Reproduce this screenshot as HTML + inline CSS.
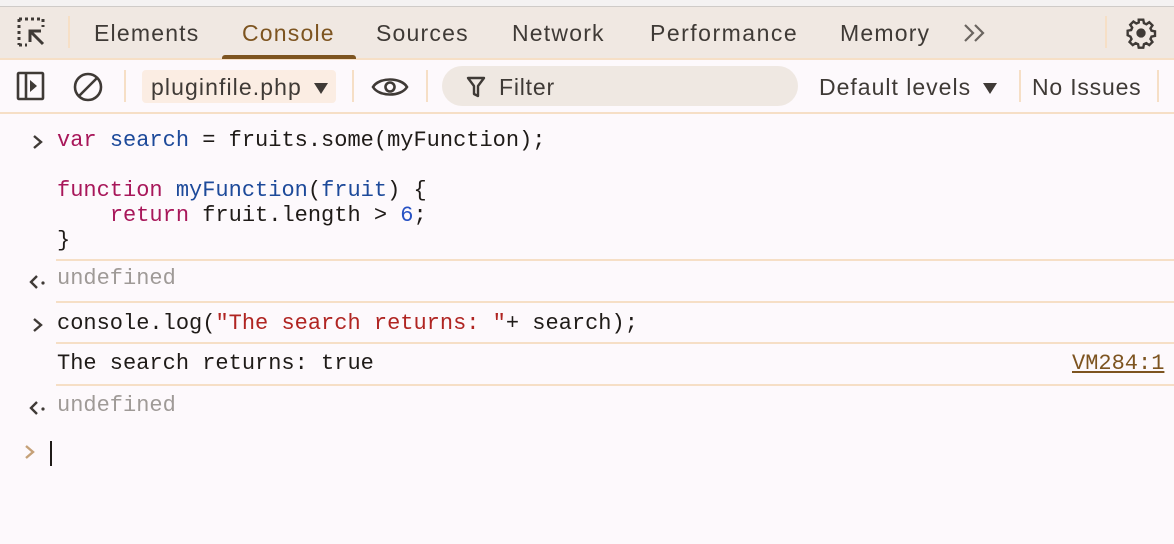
<!DOCTYPE html>
<html><head><meta charset="utf-8"><style>
*{margin:0;padding:0;box-sizing:border-box}
body{width:1174px;height:544px;overflow:hidden;background:#fdf9fc;font-family:"Liberation Sans",sans-serif;color:#3f3a36;position:relative}
.a{position:absolute}
.mono{font-family:"Liberation Mono",monospace;font-size:22px;white-space:pre;line-height:25px}
.tab{position:absolute;top:20px;font-size:23px;color:#3f3a36;letter-spacing:1.2px}
.sep{position:absolute;left:56px;right:0;height:2px;background:#f6dfc6}
</style></head><body>
<div class="a" style="left:0;top:0;width:1174px;height:6px;background:#f4f2f2"></div>
<div class="a" style="left:0;top:6px;width:1174px;height:1px;background:#cfcbc8"></div>
<div class="a" style="left:0;top:7px;width:1174px;height:51px;background:#f0e8e2"></div>
<div class="a" style="left:0;top:58px;width:1174px;height:2px;background:#f6dfc6"></div>
<svg class="a" style="left:16px;top:17px" width="32" height="32" viewBox="0 0 32 32" fill="none" stroke="#3f3a36" stroke-width="3">
<path d="M3 2h24" stroke-dasharray="3 3"/><path d="M3 2v26" stroke-dasharray="3 3"/><path d="M3 28h8" stroke-dasharray="3 3"/><path d="M27 2v8" stroke-dasharray="3 3"/>
<path d="M27 27L15 15M14 25V14h11"/></svg>
<div class="a" style="left:68px;top:16px;width:2px;height:32px;background:#f6dfc6"></div>
<div class="tab" style="left:94px">Elements</div>
<div class="tab" style="left:242px;color:#7d5420">Console</div>
<div class="a" style="left:222px;top:55px;width:134px;height:4px;background:#7d5420;border-radius:3px 3px 0 0"></div>
<div class="tab" style="left:376px">Sources</div>
<div class="tab" style="left:512px">Network</div>
<div class="tab" style="left:650px;letter-spacing:1.5px">Performance</div>
<div class="tab" style="left:840px">Memory</div>
<svg class="a" style="left:962px;top:22px" width="28" height="22" viewBox="0 0 28 22" fill="none" stroke="#6b6560" stroke-width="2.2"><path d="M3 3l8 8-8 8M13 3l8 8-8 8"/></svg>
<div class="a" style="left:1105px;top:16px;width:2px;height:32px;background:#f6dfc6"></div>
<svg class="a" style="left:1125px;top:17px" width="32" height="32" viewBox="0 0 24 24" fill="none" stroke="#3f3a36" stroke-width="1.8"><path d="M10.3 2h3.4l.5 2.6 1.8.8 2.2-1.5 2.4 2.4-1.5 2.2.8 1.8 2.6.5v3.4l-2.6.5-.8 1.8 1.5 2.2-2.4 2.4-2.2-1.5-1.8.8-.5 2.6h-3.4l-.5-2.6-1.8-.8-2.2 1.5-2.4-2.4 1.5-2.2-.8-1.8L2 13.7v-3.4l2.6-.5.8-1.8-1.5-2.2 2.4-2.4 2.2 1.5 1.8-.8z"/><circle cx="12" cy="12" r="2.6" fill="#3f3a36"/></svg>
<!-- toolbar -->
<svg class="a" style="left:16px;top:71px" width="30" height="30" viewBox="0 0 30 30" fill="none" stroke="#3f3a36" stroke-width="2.6"><rect x="2" y="2" width="25" height="26" rx="1"/><path d="M10 2v26"/><path d="M14 9l7 6-7 6z" fill="#3f3a36" stroke="none"/></svg>
<svg class="a" style="left:72px;top:71px" width="32" height="32" viewBox="0 0 32 32" fill="none" stroke="#3f3a36" stroke-width="2.6"><circle cx="16" cy="16" r="13"/><path d="M7 25L25 7"/></svg>
<div class="a" style="left:124px;top:70px;width:2px;height:32px;background:#f6dfc6"></div>
<div class="a" style="left:142px;top:70px;width:194px;height:33px;background:#fbede3;border-radius:4px"></div>
<div class="a" style="left:151px;top:74px;font-size:23px;letter-spacing:1.1px">pluginfile.php</div>
<svg class="a" style="left:314px;top:83px" width="14" height="12"><path d="M0 0h14L7 11z" fill="#3f3a36"/></svg>
<div class="a" style="left:352px;top:70px;width:2px;height:32px;background:#f6dfc6"></div>
<svg class="a" style="left:371px;top:74px" width="38" height="26" viewBox="0 0 38 26" fill="none" stroke="#3f3a36" stroke-width="2.6"><path d="M2 13C8 3 30 3 36 13C30 23 8 23 2 13z"/><circle cx="19" cy="13" r="4.5"/></svg>
<div class="a" style="left:426px;top:70px;width:2px;height:32px;background:#f6dfc6"></div>
<div class="a" style="left:442px;top:66px;width:356px;height:40px;background:#efe8e2;border-radius:20px"></div>
<svg class="a" style="left:466px;top:76px" width="20" height="22" viewBox="0 0 20 22" fill="none" stroke="#3f3a36" stroke-width="2.4"><path d="M2 2h16l-6 8v10l-4-2v-8z" stroke-linejoin="round"/></svg>
<div class="a" style="left:499px;top:74px;font-size:23px;letter-spacing:0.8px">Filter</div>
<div class="a" style="left:819px;top:74px;font-size:23px;letter-spacing:1px">Default levels</div>
<svg class="a" style="left:983px;top:83px" width="14" height="12"><path d="M0 0h14L7 11z" fill="#3f3a36"/></svg>
<div class="a" style="left:1019px;top:70px;width:2px;height:32px;background:#f6dfc6"></div>
<div class="a" style="left:1032px;top:74px;font-size:23px;letter-spacing:0.8px">No Issues</div>
<div class="a" style="left:1157px;top:70px;width:2px;height:32px;background:#f6dfc6"></div>
<div class="a" style="left:0;top:112px;width:1174px;height:2px;background:#f6dfc6"></div>
<!-- console -->
<svg class="a" style="left:31px;top:133px" width="14" height="18" fill="none" stroke="#3f3a36" stroke-width="2.4"><path d="M3 3l7 6-7 6"/></svg>
<div class="a mono" style="left:57px;top:128px;color:#1f1b18"><span style="color:#a8175a">var</span> <span style="color:#1d4a9a">search</span> = fruits.some(myFunction);

<span style="color:#a8175a">function</span> <span style="color:#1d4a9a">myFunction</span>(<span style="color:#1d4a9a">fruit</span>) {
    <span style="color:#a8175a">return</span> fruit.length &gt; <span style="color:#2752c4">6</span>;
}</div>
<div class="sep" style="top:259px"></div>
<svg class="a" style="left:29px;top:274px" width="18" height="16" fill="none" stroke="#3f3a36" stroke-width="2.4"><path d="M8 2l-6 6 6 6"/><circle cx="14" cy="9" r="1.6" fill="#3f3a36" stroke="none"/></svg>
<div class="a mono" style="left:57px;top:266px;color:#9f9a97">undefined</div>
<div class="sep" style="top:301px"></div>
<svg class="a" style="left:31px;top:316px" width="14" height="18" fill="none" stroke="#3f3a36" stroke-width="2.4"><path d="M3 3l7 6-7 6"/></svg>
<div class="a mono" style="left:57px;top:311px;color:#1f1b18">console.log(<span style="color:#b02522">"The search returns: "</span>+ search);</div>
<div class="sep" style="top:342px"></div>
<div class="a mono" style="left:57px;top:351px;color:#1f1b18">The search returns: true</div>
<div class="a mono" style="left:1072px;top:351px;color:#7d5420;text-decoration:underline">VM284:1</div>
<div class="sep" style="top:384px"></div>
<svg class="a" style="left:29px;top:400px" width="18" height="16" fill="none" stroke="#3f3a36" stroke-width="2.4"><path d="M8 2l-6 6 6 6"/><circle cx="14" cy="9" r="1.6" fill="#3f3a36" stroke="none"/></svg>
<div class="a mono" style="left:57px;top:393px;color:#9f9a97">undefined</div>
<svg class="a" style="left:23px;top:443px" width="14" height="18" fill="none" stroke="#c5a178" stroke-width="2.4"><path d="M3 3l7 6-7 6"/></svg>
<div class="a" style="left:50px;top:441px;width:2px;height:25px;background:#1f1b18"></div>
</body></html>
